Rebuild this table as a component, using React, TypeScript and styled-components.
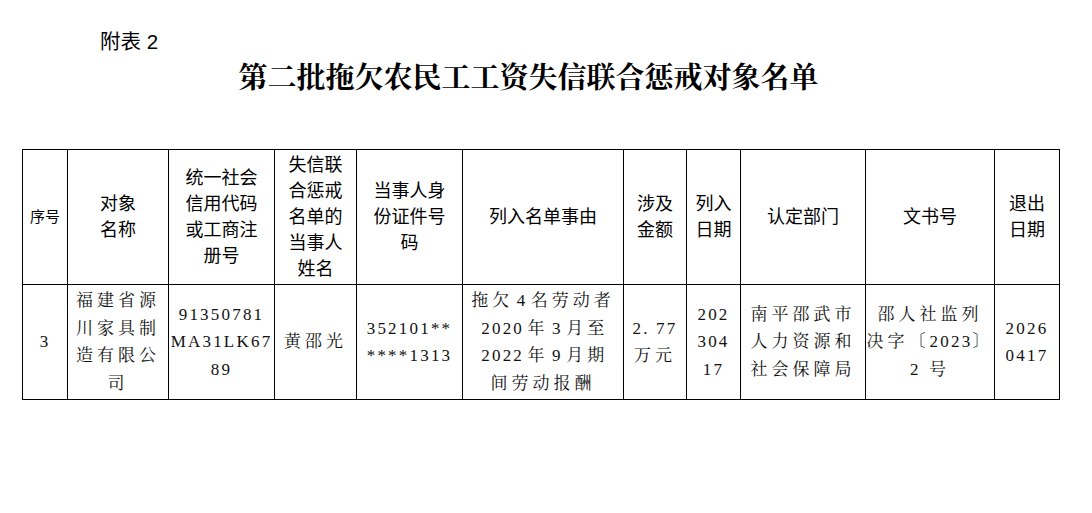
import React from 'react';
import styled, { createGlobalStyle } from 'styled-components';

const SANS = `"Liberation Sans", "Noto Sans CJK SC", sans-serif`;
const SERIF = `"Liberation Serif", "Noto Serif CJK SC", "Noto Sans CJK SC", serif`;

const GlobalStyle = createGlobalStyle`
  html, body {
    margin: 0;
    padding: 0;
    background: #ffffff;
  }
`;

const Page = styled.div`
  width: 1092px;
  height: 513px;
  padding-top: 30px;
  box-sizing: border-box;
  color: #000;
`;

const Caption = styled.div`
  padding-left: 100px;
  font-family: ${SANS};
  font-size: 20.5px;
  line-height: 24px;
`;

const Title = styled.h1`
  margin: 7px 0 0;
  width: 1057px;
  text-align: center;
  font-family: ${SERIF};
  font-size: 29px;
  line-height: 34px;
  font-weight: 700;
`;

const Table = styled.table`
  margin: 54px 0 0 22px;
  width: 1038px;
  border-collapse: collapse;
  table-layout: fixed;
`;

const HeadCell = styled.th<{ small?: boolean }>`
  height: 134px;
  padding: 0;
  border: 1px solid #000;
  text-align: center;
  vertical-align: middle;
  font-family: ${SANS};
  font-weight: 400;
  font-size: ${p => (p.small ? 15 : 18)}px;
  line-height: 26px;
`;

const BodyCell = styled.td<{ numeric?: boolean }>`
  height: 114px;
  padding: 0;
  border: 1px solid #000;
  text-align: center;
  vertical-align: middle;
  font-family: ${SERIF};
  font-size: 17px;
  line-height: 27.5px;
  letter-spacing: ${p => (p.numeric ? 2.2 : 4)}px;
  color: #111;
  white-space: nowrap;
`;

const Num = styled.span<{ gap?: boolean }>`
  letter-spacing: 2.2px;
  margin: 0 ${p => (p.gap ? 3.5 : 0)}px;
`;

const Lines: React.FC<{ lines: React.ReactNode[] }> = ({ lines }) => (
  <>
    {lines.map((l, i) => (
      <React.Fragment key={i}>
        {i > 0 && <br />}
        {l}
      </React.Fragment>
    ))}
  </>
);

const widths = [45, 101, 106, 82, 106, 161, 63, 54, 125, 129, 65];

const headers: { lines: string[]; small?: boolean }[] = [
  { lines: ['序号'], small: true },
  { lines: ['对象', '名称'] },
  { lines: ['统一社会', '信用代码', '或工商注', '册号'] },
  { lines: ['失信联', '合惩戒', '名单的', '当事人', '姓名'] },
  { lines: ['当事人身', '份证件号', '码'] },
  { lines: ['列入名单事由'] },
  { lines: ['涉及', '金额'] },
  { lines: ['列入', '日期'] },
  { lines: ['认定部门'] },
  { lines: ['文书号'] },
  { lines: ['退出', '日期'] },
];

export default function App() {
  return (
    <Page>
      <GlobalStyle />
      <Caption>附表 2</Caption>
      <Title>第二批拖欠农民工工资失信联合惩戒对象名单</Title>
      <Table>
        <colgroup>
          {widths.map((w, i) => (
            <col key={i} style={{ width: w }} />
          ))}
        </colgroup>
        <thead>
          <tr>
            {headers.map((h, i) => (
              <HeadCell key={i} small={h.small}>
                <Lines lines={h.lines} />
              </HeadCell>
            ))}
          </tr>
        </thead>
        <tbody>
          <tr>
            <BodyCell numeric>3</BodyCell>
            <BodyCell>
              <Lines lines={['福建省源', '川家具制', '造有限公', '司']} />
            </BodyCell>
            <BodyCell numeric>
              <Lines lines={['91350781', 'MA31LK67', '89']} />
            </BodyCell>
            <BodyCell>黄邵光</BodyCell>
            <BodyCell numeric>
              <Lines lines={['352101**', '****1313']} />
            </BodyCell>
            <BodyCell>
              <Lines
                lines={[
                  <>拖欠<Num gap>4</Num>名劳动者</>,
                  <><Num gap>2020</Num>年<Num gap>3</Num>月至</>,
                  <><Num gap>2022</Num>年<Num gap>9</Num>月期</>,
                  '间劳动报酬',
                ]}
              />
            </BodyCell>
            <BodyCell>
              <Lines lines={[<Num>2. 77</Num>, '万元']} />
            </BodyCell>
            <BodyCell numeric>
              <Lines lines={['202', '304', '17']} />
            </BodyCell>
            <BodyCell>
              <Lines lines={['南平邵武市', '人力资源和', '社会保障局']} />
            </BodyCell>
            <BodyCell>
              <Lines
                lines={[
                  '邵人社监列',
                  <>决字〔<Num>2023</Num>〕</>,
                  <><Num>2</Num> 号</>,
                ]}
              />
            </BodyCell>
            <BodyCell numeric>
              <Lines lines={['2026', '0417']} />
            </BodyCell>
          </tr>
        </tbody>
      </Table>
    </Page>
  );
}
